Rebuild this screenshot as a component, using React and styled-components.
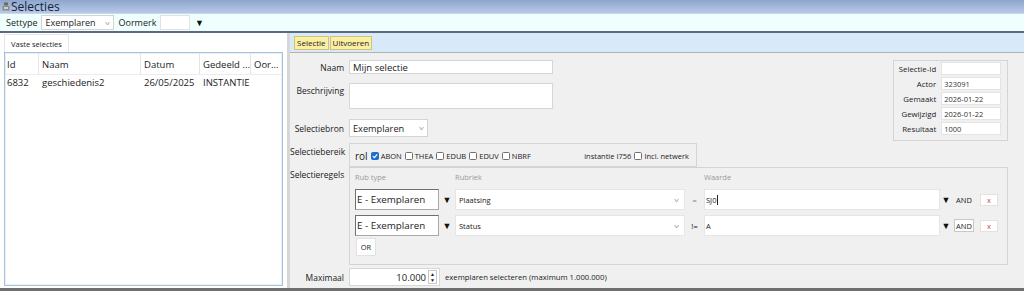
import React from "react";
import styled, { createGlobalStyle } from "styled-components";

const Global = createGlobalStyle`
  html, body { margin: 0; padding: 0; }
  body {
    font-family: "Open Sans", "Noto Sans", sans-serif;
    font-size: 9px;
    color: #1b1b1b;
    background: #f0f0f0;
    overflow: hidden;
  }
  * { box-sizing: border-box; }
`;

const Page = styled.div`
  width: 1024px;
  height: 291px;
  display: flex;
  flex-direction: column;
  background: #f0f0f0;
`;

const TitleBar = styled.div`
  height: 14px;
  display: flex;
  align-items: center;
  gap: 1px;
  padding-left: 2px;
  background: linear-gradient(#8ea6cd, #b7c9e6);
  border-bottom: 1px solid #c8d8ee;
  overflow: visible;
`;

const Title = styled.span`
  font-size: 12px;
  line-height: 13px;
  color: #14233a;
`;

const Toolbar = styled.div`
  height: 19px;
  display: flex;
  align-items: center;
  gap: 4px;
  padding-left: 6px;
  background: #eefffd;
  border-bottom: 2px solid #5b6a7c;
`;

const ToolLabel = styled.span`
  font-size: 9px;
`;

const SelectBox = styled.div`
  display: flex;
  align-items: center;
  justify-content: space-between;
  width: ${(p) => p.$w}px;
  height: ${(p) => p.$h || 15}px;
  padding: 0 4px 0 3px;
  background: #fff;
  border: 1px solid #d4d4d4;
  font-size: ${(p) => p.$fs || 9}px;
`;

const Chevron = styled.span`
  font-size: 6px;
  color: #9a9a9a;
  transform: scaleX(1.5);
`;

const SmallInput = styled.div`
  width: ${(p) => p.$w}px;
  height: 15px;
  background: #fff;
  border: 1px solid #e2e2e2;
`;

const Tri = styled.span`
  font-size: 9px;
  color: #111;
  width: ${(p) => p.$w || 10}px;
  text-align: center;
`;

const Main = styled.div`
  flex: 1;
  display: flex;
  border-bottom: 3px solid #6d6f73;
  min-height: 0;
`;

const LeftPanel = styled.div`
  width: 289px;
  background: #fff;
  border-right: 2px solid #d6d6d6;
  display: flex;
  flex-direction: column;
  padding: 1px 4px 2px 4px;
`;

const Tab = styled.div`
  align-self: flex-start;
  height: 18px;
  padding: 0 6px;
  display: flex;
  align-items: center;
  font-size: 7.5px;
  border: 1px solid #e6e6e6;
  border-bottom: none;
`;

const TableBox = styled.div`
  flex: 1;
  padding-top: 1px;
  border: 1px solid #a9c1d9;
  box-shadow: inset 0 0 0 1px #e8eef5;
`;

const GridRow = styled.div`
  display: grid;
  grid-template-columns: 34px 102px 59px 51px 1fr;
  height: ${(p) => p.$h}px;
  align-items: center;
  border-bottom: 1px solid ${(p) => (p.$head ? "#ececec" : "transparent")};
  font-size: 9.5px;
`;

const Cell = styled.span`
  padding-left: ${(p) => (p.$first ? 2 : 3)}px;
  height: 100%;
  display: flex;
  align-items: center;
  border-right: 1px solid ${(p) => (p.$head ? "#e4e4e4" : "transparent")};
  white-space: nowrap;
  overflow: hidden;
`;

const RightPanel = styled.div`
  flex: 1;
  display: flex;
  flex-direction: column;
  border-left: 1px solid #d9d9d9;
`;

const ButtonBar = styled.div`
  height: 20px;
  display: flex;
  align-items: center;
  padding-left: 4px;
  background: #d8eafa;
  border-bottom: 1px solid #b2b2b2;
  gap: 1px;
`;

const YellowBtn = styled.div`
  height: 14px;
  padding: 0 2px;
  display: flex;
  align-items: center;
  font-size: 8px;
  background: #fbefa3;
  border: 1px solid #d2c37a;
`;

const Content = styled.div`
  flex: 1;
  padding: 6px 16px 0 0;
  display: flex;
  flex-direction: column;
`;

const TopSection = styled.div`
  display: flex;
  justify-content: space-between;
  align-items: flex-start;
`;

const FormCol = styled.div`
  display: flex;
  flex-direction: column;
`;

const Row = styled.div`
  display: flex;
  align-items: ${(p) => (p.$top ? "flex-start" : "center")};
  gap: 5px;
  margin-top: ${(p) => p.$mt || 0}px;
`;

const Label = styled.div`
  width: 54px;
  text-align: right;
  font-size: 8.5px;
  padding-top: ${(p) => p.$pt || 0}px;
  white-space: nowrap;
`;

const TextInput = styled.div`
  width: ${(p) => p.$w}px;
  height: ${(p) => p.$h}px;
  background: #fff;
  border: 1px solid #d6d6d6;
  padding: 0 3px;
  font-size: 9.5px;
  display: flex;
  align-items: center;
`;

const NumberInput = styled.div`
  width: 91px;
  height: 18px;
  background: #fff;
  border: 1px solid #d6d6d6;
  padding: 0 2px 0 3px;
  font-size: 9.5px;
  display: flex;
  align-items: center;
  justify-content: flex-end;
  gap: 2px;
`;

const InfoBox = styled.div`
  width: 115px;
  margin-top: 1px;
  padding: 1px 6px 5px 3px;
  border: 1px solid #d4d4d4;
  display: flex;
  flex-direction: column;
  gap: 2px;
`;

const InfoRow = styled.div`
  display: flex;
  align-items: center;
  gap: 5px;
`;

const InfoLabel = styled.div`
  width: 40px;
  text-align: right;
  font-size: 7.8px;
  white-space: nowrap;
`;

const InfoValue = styled.div`
  width: 61px;
  height: 13px;
  background: #fff;
  border: 1px solid #e4e4e4;
  font-size: 7.5px;
  padding-left: 2px;
  display: flex;
  align-items: center;
  color: #333;
`;

const BereikBox = styled.div`
  width: 348px;
  height: 24px;
  border: 1px solid #d4d4d4;
  display: flex;
  align-items: center;
  padding: 1px 4px 0 5px;
  font-size: 7.5px;
`;

const Rol = styled.span`
  font-size: 10px;
  margin-right: 3px;
`;

const CheckItem = styled.span`
  display: inline-flex;
  align-items: center;
  gap: 2px;
  margin-right: 3px;
`;

const Box = styled.span`
  width: 8px;
  height: 8px;
  border-radius: 1.5px;
  border: 1px solid ${(p) => (p.$on ? "#1f6fd1" : "#6f6f6f")};
  background: ${(p) => (p.$on ? "#1f6fd1" : "#fff")};
  display: inline-flex;
  align-items: center;
  justify-content: center;
`;

const Spacer = styled.span`
  flex: 1;
`;

const RegelsBox = styled.div`
  flex: 1;
  height: 98px;
  border: 1px solid #d4d4d4;
  padding: 4px 6px 0 5px;
  display: flex;
  flex-direction: column;
`;

const HeadRow = styled.div`
  display: grid;
  grid-template-columns: 100px 249px 1fr;
  color: #9a9a9a;
  font-size: 7.5px;
  height: 17px;
`;

const RuleRow = styled.div`
  display: flex;
  align-items: center;
  height: 21px;
  margin-top: ${(p) => p.$mt || 0}px;
`;

const RubType = styled.div`
  width: 84px;
  height: 21px;
  background: #fff;
  border: 1px solid #a9a9a9;
  border-top-color: #6f6f6f;
  border-left-color: #6f6f6f;
  font-size: 9.8px;
  display: flex;
  align-items: center;
  padding-left: 1px;
`;

const Rubriek = styled.div`
  width: 230px;
  height: 21px;
  background: #fff;
  border: 1px solid #e6e6e6;
  font-size: 7.5px;
  display: flex;
  align-items: center;
  justify-content: space-between;
  padding: 0 6px 0 3px;
`;

const Op = styled.span`
  width: 19px;
  text-align: center;
  font-size: 8px;
  color: ${(p) => (p.$dim ? "#888" : "#222")};
`;

const Waarde = styled.div`
  width: 236px;
  height: 21px;
  background: #fff;
  border: 1px solid #e6e6e6;
  font-size: 7.5px;
  display: flex;
  align-items: center;
  padding-left: 1px;
`;

const AndBtn = styled.div`
  width: 20px;
  height: 13px;
  display: flex;
  align-items: center;
  justify-content: center;
  font-size: 7.5px;
  background: ${(p) => (p.$boxed ? "#fff" : "transparent")};
  border: 1px solid ${(p) => (p.$boxed ? "#c8c8c8" : "transparent")};
  margin-left: 2px;
`;

const XBtn = styled.div`
  width: 18px;
  height: 12px;
  margin-left: 6px;
  background: #fff;
  border: 1px solid #e2e2e2;
  color: #d04848;
  font-size: 7.5px;
  display: flex;
  align-items: center;
  justify-content: center;
`;

const OrBtn = styled.div`
  width: 20px;
  height: 18px;
  margin-top: 2px;
  margin-left: 1px;
  background: #fff;
  border: 1px solid #e2e2e2;
  font-size: 7.5px;
  display: flex;
  align-items: center;
  justify-content: center;
`;

const Spin = styled.div`
  width: 9px;
  height: 14px;
  display: flex;
  flex-direction: column;
  border: 1px solid #c8c8c8;
  background: #fff;
  font-size: 5px;
  align-items: center;
  justify-content: space-around;
  line-height: 5px;
`;

const MaxNote = styled.span`
  font-size: 7.7px;
`;

const Caret = styled.span`
  display: inline-block;
  width: 1px;
  height: 10px;
  background: #222;
  margin-left: 1px;
`;

const Check = () => (
  <svg width="6" height="6" viewBox="0 0 6 6">
    <path d="M0.8 3.1 L2.4 4.6 L5.2 1.3" fill="none" stroke="#fff" strokeWidth="1.2" />
  </svg>
);

const AppIcon = () => (
  <svg width="8" height="9" viewBox="0 0 8 9">
    <rect x="2" y="0.5" width="4" height="3" fill="#6b6b6b" />
    <rect x="0.5" y="4" width="7" height="4.5" fill="#8a8a8a" />
    <rect x="2" y="5" width="4" height="2" fill="#d0d0d0" />
  </svg>
);

const cbs = [
  ["ABON", true],
  ["THEA", false],
  ["EDUB", false],
  ["EDUV", false],
  ["NBRF", false],
];

const info = [
  ["Selectie-Id", ""],
  ["Actor", "323091"],
  ["Gemaakt", "2026-01-22"],
  ["Gewijzigd", "2026-01-22"],
  ["Resultaat", "1000"],
];

export default function App() {
  return (
    <Page>
      <Global />
      <TitleBar>
        <AppIcon />
        <Title>Selecties</Title>
      </TitleBar>
      <Toolbar>
        <ToolLabel>Settype</ToolLabel>
        <SelectBox $w={73} $fs={9}>
          Exemplaren <Chevron>v</Chevron>
        </SelectBox>
        <ToolLabel>Oormerk</ToolLabel>
        <SmallInput $w={30} />
        <Tri>▼</Tri>
      </Toolbar>
      <Main>
        <LeftPanel>
          <Tab>Vaste selecties</Tab>
          <TableBox>
            <GridRow $head $h={21}>
              <Cell $head $first>Id</Cell>
              <Cell $head>Naam</Cell>
              <Cell $head>Datum</Cell>
              <Cell $head>Gedeeld ...</Cell>
              <Cell>Oor...</Cell>
            </GridRow>
            <GridRow $h={16}>
              <Cell $first>6832</Cell>
              <Cell>geschiedenis2</Cell>
              <Cell>26/05/2025</Cell>
              <Cell>INSTANTIE</Cell>
              <Cell></Cell>
            </GridRow>
          </TableBox>
        </LeftPanel>
        <RightPanel>
          <ButtonBar>
            <YellowBtn>Selectie</YellowBtn>
            <YellowBtn>Uitvoeren</YellowBtn>
          </ButtonBar>
          <Content>
            <TopSection>
              <FormCol>
                <Row $mt={1}>
                  <Label>Naam</Label>
                  <TextInput $w={204} $h={14}>Mijn selectie</TextInput>
                </Row>
                <Row $mt={9} $top>
                  <Label $pt={2}>Beschrijving</Label>
                  <TextInput $w={204} $h={26} />
                </Row>
                <Row $mt={10}>
                  <Label>Selectiebron</Label>
                  <SelectBox $w={79} $h={18} $fs={9.2}>
                    Exemplaren <Chevron>v</Chevron>
                  </SelectBox>
                </Row>
              </FormCol>
              <InfoBox>
                {info.map(([l, v]) => (
                  <InfoRow key={l}>
                    <InfoLabel>{l}</InfoLabel>
                    <InfoValue>{v}</InfoValue>
                  </InfoRow>
                ))}
              </InfoBox>
            </TopSection>
            <Row $mt={2} $top>
              <Label $pt={3}>Selectiebereik</Label>
              <BereikBox>
                <Rol>rol</Rol>
                {cbs.map(([n, on]) => (
                  <CheckItem key={n}>
                    <Box $on={on}>{on && <Check />}</Box>
                    {n}
                  </CheckItem>
                ))}
                <Spacer />
                <CheckItem>instantie I756</CheckItem>
                <CheckItem>
                  <Box />
                  Incl. netwerk
                </CheckItem>
              </BereikBox>
            </Row>
            <Row $top>
              <Label $pt={2}>Selectieregels</Label>
              <RegelsBox>
                <HeadRow>
                  <span>Rub type</span>
                  <span>Rubriek</span>
                  <span>Waarde</span>
                </HeadRow>
                {[
                  ["Plaatsing", "=", true, "SJ0", false],
                  ["Status", "!=", false, "A", true],
                ].map(([rub, op, dim, val, boxed], i) => (
                  <RuleRow key={rub} $mt={i ? 5 : 0}>
                    <RubType>E - Exemplaren</RubType>
                    <Tri $w={16}>▼</Tri>
                    <Rubriek>
                      {rub} <Chevron>v</Chevron>
                    </Rubriek>
                    <Op $dim={dim}>{op}</Op>
                    <Waarde>
                      {val}
                      {i === 0 && <Caret />}
                    </Waarde>
                    <Tri $w={12}>▼</Tri>
                    <AndBtn $boxed={boxed}>AND</AndBtn>
                    <XBtn>x</XBtn>
                  </RuleRow>
                ))}
                <OrBtn>OR</OrBtn>
              </RegelsBox>
            </Row>
            <Row $mt={3}>
              <Label>Maximaal</Label>
              <NumberInput>
                10.000
                <Spin>
                  <span>▲</span>
                  <span>▼</span>
                </Spin>
              </NumberInput>
              <MaxNote>exemplaren selecteren (maximum 1.000.000)</MaxNote>
            </Row>
          </Content>
        </RightPanel>
      </Main>
    </Page>
  );
}
